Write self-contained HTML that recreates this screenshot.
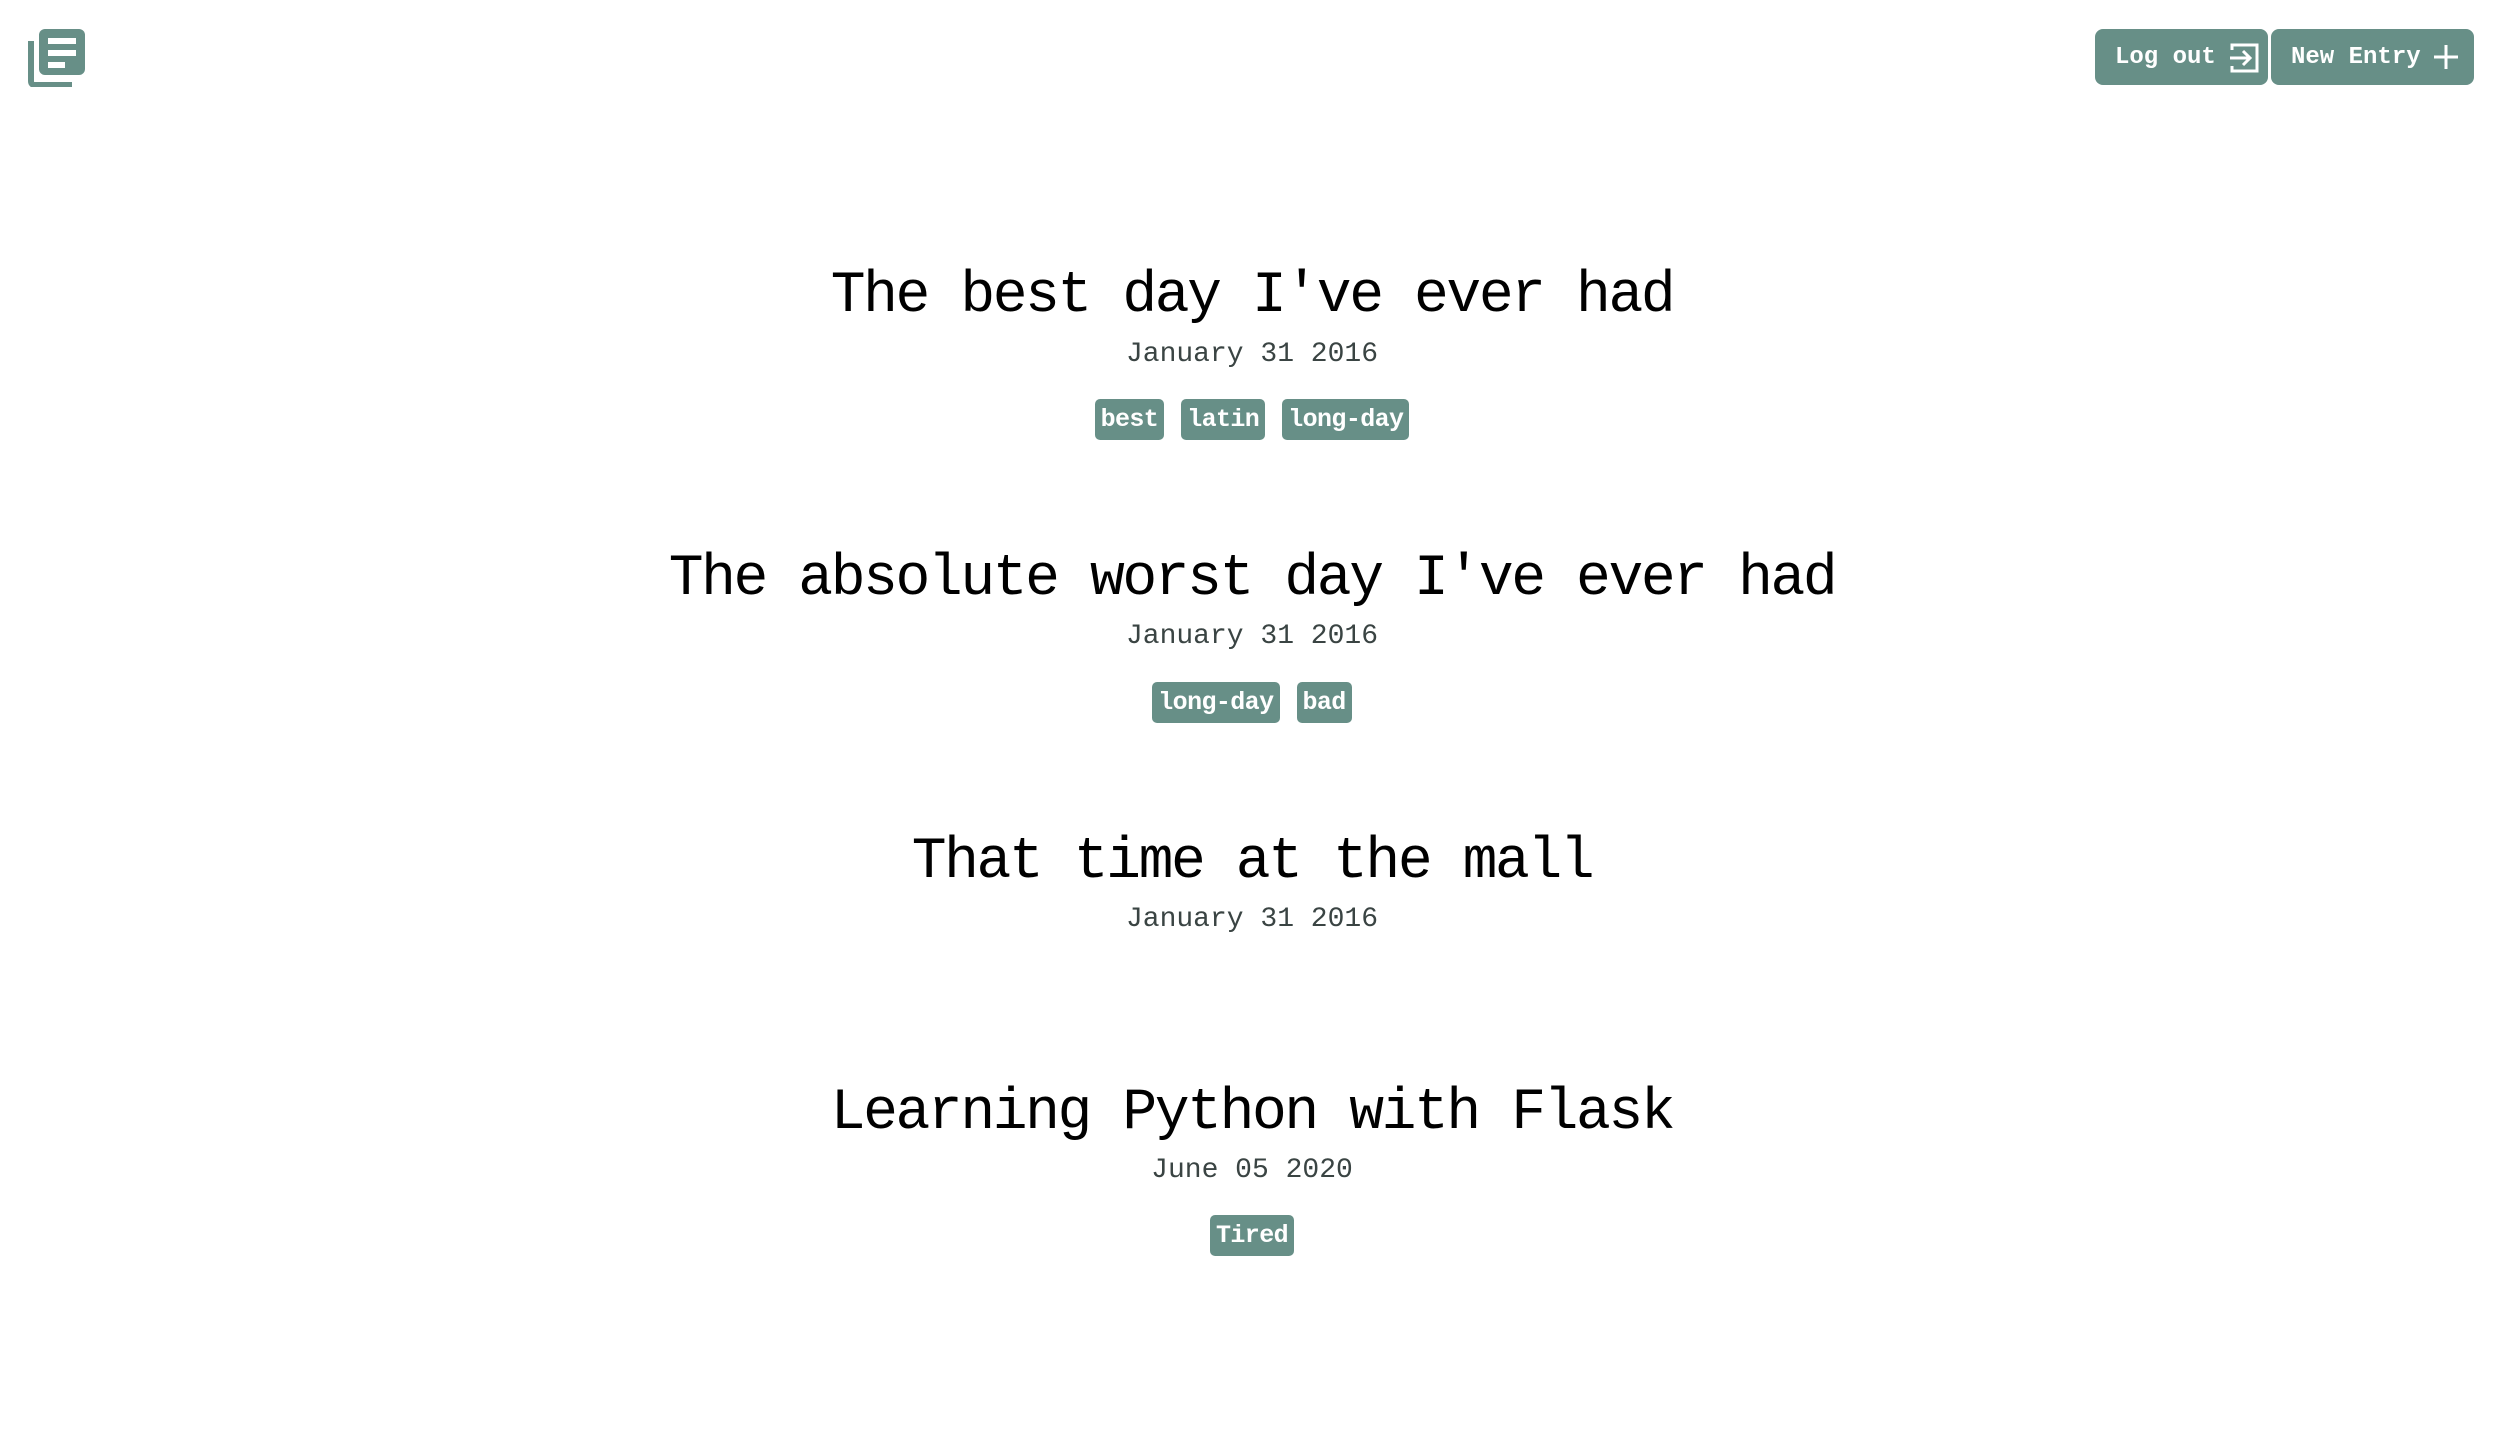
<!DOCTYPE html>
<html><head><meta charset="utf-8"><style>
html,body{margin:0;padding:0;background:#fff;width:2504px;height:1436px;overflow:hidden;font-family:"Liberation Mono",monospace}
.logo{position:absolute;left:28px;top:29px}
.btn{position:absolute;top:29px;height:56px;background:#678f87;color:#fff;border-radius:8px;font-size:24px;font-weight:bold;display:flex;align-items:center;box-sizing:border-box;padding-left:20px}
.e{position:absolute;left:0;width:2504px;text-align:center}
.t{font-size:58px;letter-spacing:-2.4px;color:#000;line-height:1;white-space:nowrap}
.d{font-size:28px;color:#3a4443;line-height:1}
.tags{display:flex;justify-content:center;gap:17px}
.tag{background:#678f87;color:#fff;font-size:25px;font-weight:bold;height:41px;line-height:41px;padding:0 6px;border-radius:5px;letter-spacing:-0.6px}
</style></head><body>
<svg class="logo" width="58" height="58" viewBox="0 0 58 58">
<rect x="11" y="0" width="46" height="46" rx="6" fill="#678f87"/>
<rect x="20" y="9" width="28" height="6" fill="#fff"/>
<rect x="20" y="21" width="28" height="6" fill="#fff"/>
<rect x="20" y="33" width="17" height="6" fill="#fff"/>
<path d="M3 12 V52 Q3 56 7 56 H44" stroke="#678f87" stroke-width="6" fill="none"/>
</svg>
<div class="btn" style="left:2095px;width:173px">Log out
<svg width="34" height="34" viewBox="0 0 34 34" style="margin-left:10px"><path d="M6 10 V5 H31 V31 H6 V26" stroke="#fff" stroke-width="3" fill="none"/><path d="M4 18 H24 M17 11 L24 18 L17 25" stroke="#fff" stroke-width="3" fill="none"/></svg></div>
<div class="btn" style="left:2271px;width:203px">New Entry
<svg width="30" height="30" viewBox="0 0 30 30" style="margin-left:10px"><path d="M15 3 V27 M3 15 H27" stroke="#fff" stroke-width="3"/></svg></div>

<div class="e t" style="top:268px">The best day I've ever had</div>
<div class="e d" style="top:341px">January 31 2016</div>
<div class="e" style="top:399px"><div class="tags"><span class="tag">best</span><span class="tag">latin</span><span class="tag">long-day</span></div></div>

<div class="e t" style="top:551px">The absolute worst day I've ever had</div>
<div class="e d" style="top:623px">January 31 2016</div>
<div class="e" style="top:682px"><div class="tags"><span class="tag">long-day</span><span class="tag">bad</span></div></div>

<div class="e t" style="top:834px">That time at the mall</div>
<div class="e d" style="top:906px">January 31 2016</div>

<div class="e t" style="top:1085px">Learning Python with Flask</div>
<div class="e d" style="top:1157px">June 05 2020</div>
<div class="e" style="top:1215px"><div class="tags"><span class="tag">Tired</span></div></div>
</body></html>
